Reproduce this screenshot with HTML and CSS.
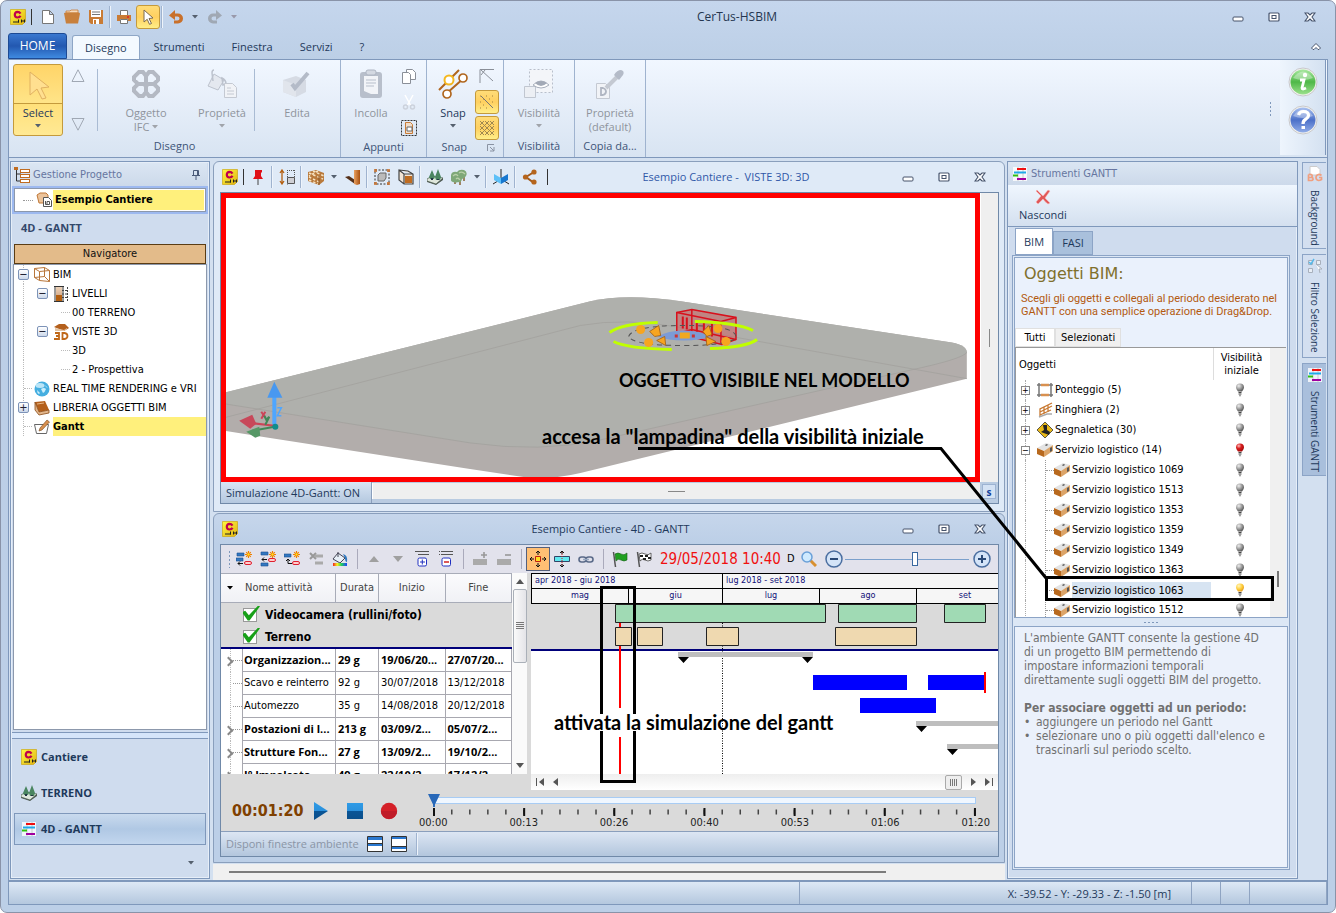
FILE: index.html
```html
<!DOCTYPE html>
<html lang="it">
<head>
<meta charset="utf-8">
<title>CerTus-HSBIM</title>
<link rel="stylesheet" href="styles.css">
</head>
<body>
<svg class="defs" aria-hidden="true">
  <defs>
    <linearGradient id="g-gold" x1="0" y1="0" x2="1" y2="1"><stop offset="0" stop-color="#fffa40"/><stop offset="1" stop-color="#e0b010"/></linearGradient>
    <linearGradient id="g-play" x1="0" y1="0" x2="0" y2="1"><stop offset="0" stop-color="#2f9be6"/><stop offset=".5" stop-color="#2a90dc"/><stop offset=".5" stop-color="#0a5596"/><stop offset="1" stop-color="#0a4f8c"/></linearGradient>
    <radialGradient id="g-grey" cx=".35" cy=".3" r=".8"><stop offset="0" stop-color="#eee"/><stop offset=".5" stop-color="#999"/><stop offset="1" stop-color="#444"/></radialGradient>
    <radialGradient id="g-red" cx=".35" cy=".3" r=".8"><stop offset="0" stop-color="#ffc0c0"/><stop offset=".4" stop-color="#d82020"/><stop offset="1" stop-color="#900"/></radialGradient>
    <radialGradient id="g-yel" cx=".35" cy=".3" r=".8"><stop offset="0" stop-color="#fff6c0"/><stop offset=".5" stop-color="#ffd040"/><stop offset="1" stop-color="#e09010"/></radialGradient>
    <linearGradient id="g-green" x1="0" y1="0" x2="0" y2="1"><stop offset="0" stop-color="#a8e8a0"/><stop offset=".5" stop-color="#4fb848"/><stop offset="1" stop-color="#9be08c"/></linearGradient>
    <linearGradient id="g-blue" x1="0" y1="0" x2="0" y2="1"><stop offset="0" stop-color="#a8c0f0"/><stop offset=".5" stop-color="#4c70c8"/><stop offset="1" stop-color="#90acE8"/></linearGradient>
    <linearGradient id="g-slot" x1="0" y1="0" x2="0" y2="1"><stop offset="0" stop-color="#ecd2b8"/><stop offset=".6" stop-color="#d8b090"/><stop offset=".6" stop-color="#b45f10"/></linearGradient>
    <linearGradient id="g-pipe"><stop offset="0" stop-color="#e8a060"/><stop offset="1" stop-color="#a85010"/></linearGradient>
  </defs>
  <symbol id="logo" viewBox="0 0 16 16"><path d="M.5 .5h15v12l-3 3H.5z" fill="url(#g-gold)" stroke="#c8a000" stroke-width=".6"/><path d="M10.500 4.600Q9.500 2.800 7.500 2.800 4.800 3 4.800 5.800 4.800 8.400 7.500 8.500 9.800 8.400 10.500 6.800" fill="none" stroke="#c0004c" stroke-width="2.200"/><path d="M3 13h6M8.500 10.500v3M11.500 10.500v3M14.500 10.500v3M11.500 12h3" stroke="#222" fill="none"/></symbol>
  <symbol id="doc" viewBox="0 0 16 16"><path d="M2.500 1.500h7l4 4v9h-11zM9.500 1.500v4h4" fill="#fff" stroke="#777"/></symbol>
  <symbol id="folder" viewBox="0 0 16 16"><path d="M2 2h4l1-1h7v3H2z" fill="#f6dcc0" stroke="#c97b35" stroke-width=".8"/><path d="M0 4l3-.5h12l1 1-2 10H2z" fill="#c8803c"/></symbol>
  <symbol id="save" viewBox="0 0 16 16"><path d="M1 1h14v14H3l-2-2z" fill="#c97b35"/><path d="M3 1h10v7H3zM5 10h6v5H5z" fill="#fff"/><path d="M4 3h8M4 5.500h8" stroke="#777"/><path d="M6 11h2v4H6z" fill="#c97b35"/></symbol>
  <symbol id="print" viewBox="0 0 16 16"><path d="M4.500 1.500h7v5h-7zM4.500 10.500h7v4h-7z" fill="#fff" stroke="#777"/><path d="M1 6h14v6h-3v-2H4v2H1z" fill="#c97b35"/><circle cx="12" cy="8" r="1" fill="#e02020"/></symbol>
  <symbol id="cursor" viewBox="0 0 16 16"><path d="M4 1l9 8-4 .5 2.500 5-2 .8-2.300-5L4 13z" fill="#fff" stroke="#7a6a50"/></symbol>
  <symbol id="undo" viewBox="0 0 16 16"><path d="M1 6.500L7 1v3.500h3a5 5 0 0 1 0 10H6v-3h3.500a2 2 0 0 0 0-4H7v3.500z" fill="#c9702a"/></symbol>
  <symbol id="caret" viewBox="0 0 6 4"><path d="M0 0h6L3 3.500z" fill="currentColor"/></symbol>
  <symbol id="gantt" viewBox="0 0 16 16"><path d="M1 1h14v14H1z" fill="#fff" opacity=".8"/><path d="M6 1v14M11 1v14" stroke="#ccc"/><path d="M5 3h9" stroke="#f01010" stroke-width="2"/><path d="M2 6.500h12" stroke="#20a8e8" stroke-width="2"/><path d="M1 9.500h5" stroke="#30c010" stroke-width="2"/><path d="M5 13h9" stroke="#a000a0" stroke-width="2"/></symbol>
  <symbol id="terrain" viewBox="0 0 16 16"><path d="M0 10l5-3 11 2-7 6-9-3z" fill="#dfe7dc" stroke="#5b6b5b" stroke-width=".8"/><path d="M0 12l9 3 7-6v2l-7 5-9-3z" fill="#4c5850"/><path d="M5 1l3 7-1 2H3L2 8zM11 0l3 8-1 3H9L8 8z" fill="#4a8560"/><path d="M4 9h2v2H4zM10 10h2v1h-2z" fill="#234"/></symbol>
  <symbol id="tree3" viewBox="0 0 16 16"><path d="M4 8v7M9 7v9M13 5v7" stroke="#8d6a3e" stroke-width="1.600"/><path d="M0 6q1-4 6-3 2-3 7-2 4 2 2 6-2 3-4 3-1 4-4 3-2 1-5 0-3-1-2-4z" fill="#7fa878"/><path d="M2 7q3-3 5 0M8 4q3-2 6 1M5 10q2-2 4 1" fill="none" stroke="#b9d0a8" stroke-width="1.300"/></symbol>
  <symbol id="pin" viewBox="0 0 16 16"><path d="M8 10v6" stroke="#444"/><path d="M5 1h7v2l-1 1v3l2 3H3l2-3V4z" fill="#e01018"/></symbol>
  <symbol id="level" viewBox="0 0 16 16"><path d="M3 1v14M1 4l2-3 2 3M1 12l2 3 2-3" fill="none" stroke="#b45f10" stroke-width="1.300"/><path d="M8.500 1v14.500M15.500 1v8M8 1.500h7" fill="none" stroke="#555" stroke-dasharray="1 1"/><path d="M8.500 8.500h7v6h-7z" fill="#cfcfd4" stroke="#555"/></symbol>
  <symbol id="cube" viewBox="0 0 16 16"><path d="M0 3l8-2 8 3v8l-5 4-11-4z" fill="#b97a3c"/><path d="M1 4l14 6M1 8l10 5M1 11l9 4M5 2l11 5M10 2L1 7" stroke="#f6e2c0" stroke-width="1.500" stroke-dasharray="2.500 2"/><path d="M11 7v9" stroke="#8a5320"/></symbol>
  <symbol id="pipe" viewBox="0 0 16 16"><path d="M0 8l4-1 6 4v4z" fill="#553018"/><path d="M9 1h6v14l-3 1-3-1z" fill="url(#g-pipe)"/></symbol>
  <symbol id="selcube" viewBox="0 0 16 16"><rect x="1" y="1" width="14" height="14" fill="none" stroke="#333" stroke-dasharray="2 1.500"/><path d="M4 6l2-2h6v5l-2 3H4z" fill="#bbb" stroke="#666"/><path d="M0 0h3v3H0zM13 0h3v3h-3zM0 13h3v3H0zM13 13h3v3h-3z" fill="#c9702a" opacity=".8"/></symbol>
  <symbol id="cubeframe" viewBox="0 0 16 16"><path d="M1 1l9 1 5 3v10H6l-5-4zM1 1l5 4h9M6 5v10" fill="#f3e5d6" stroke="#444" stroke-width="1.200"/><path d="M7 7h7v7H7z" fill="#c06c20"/></symbol>
  <symbol id="mirror" viewBox="0 0 16 16"><path d="M8 0v9M0 15l8-5 8 5" stroke="#222" fill="none"/><path d="M1 5l7 4v6l-7-4z" fill="#5cc0f8"/><path d="M15 5L8 9v6l7-4z" fill="#1878d0"/></symbol>
  <symbol id="share" viewBox="0 0 16 16"><path d="M12 3L4 8l8 6" fill="none" stroke="#a35a1a" stroke-width="2"/><circle cx="12" cy="3" r="2.600" fill="#b5651d"/><circle cx="3.500" cy="8" r="2.600" fill="#b5651d"/><circle cx="12" cy="13" r="2.600" fill="#b5651d"/></symbol>
  <symbol id="hierarchy" viewBox="0 0 16 16"><path d="M2.500 2v12H7M2.500 7H7" fill="none" stroke="#333"/><rect x="0" y="0" width="4" height="3" fill="#c06c20"/><rect x="6.500" y="2.500" width="9" height="3" fill="#fff" stroke="#c06c20"/><rect x="6.500" y="7.500" width="9" height="3" fill="#fff" stroke="#c06c20"/><rect x="6.500" y="12.500" width="9" height="3" fill="#fff" stroke="#c06c20"/></symbol>
  <symbol id="proj" viewBox="0 0 16 16"><path d="M1 3l3-2h6l2 2v8H3z" fill="#ecc39a" stroke="#c07838"/><path d="M7.500 5.500h5l3 3v6h-8z" fill="#fff" stroke="#555"/><path d="M9.500 9v3.500h4V9.500H11v3" fill="none" stroke="#555"/></symbol>
  <symbol id="wirebox" viewBox="0 0 16 16"><path d="M.5 1.500l10-1 5 3v11l-10-1-5-3zM.5 1.500l5 3 10-1M5.500 4.500v9M10.500 .5v9l5 5M10.500 9.500l-10 1" fill="none" stroke="#b8763a"/></symbol>
  <symbol id="levels" viewBox="0 0 16 16"><path d="M1 .5h10M1 15.500h10M2 1v14M10 1v14" stroke="#333"/><path d="M3 1h6v14H3z" fill="url(#g-slot)"/><path d="M9 4.500h5M9 8h5M9 11.500h5M14.500 1v15" stroke="#444" stroke-dasharray="2 1"/></symbol>
  <symbol id="house3d" viewBox="0 0 16 16"><path d="M1 3l5-3h6l4 4-5 3z" fill="#b4601c"/><path d="M2 4v3h9l3-2V4l-3 2z" fill="#e3c4a4"/><path d="M2 9h4v6H1M3 12h3M9.500 9v6h2q3-.5 3-3t-3-3z" fill="none" stroke="#c06818" stroke-width="1.800"/></symbol>
  <symbol id="globe" viewBox="0 0 16 16"><circle cx="8" cy="8" r="7.500" fill="#45aee0"/><ellipse cx="6" cy="4.500" rx="4.500" ry="2.500" fill="#d8f2fc" opacity=".8"/><path d="M7 8q3-2 5 0-1 3-3 4zM3 9l3 3-1 1q-2-1-2-4zM11 4l3 3-2-1z" fill="#cdeffc"/></symbol>
  <symbol id="book" viewBox="0 0 16 16"><path d="M1 2l10-1 4 9-10 2z" fill="#b4601c"/><path d="M3 4l7-1" stroke="#e8b888"/><path d="M1 2l4 10 10-2v3L5 15 1 10z" fill="#e2b68c" stroke="#8a4a14" stroke-width=".8"/></symbol>
  <symbol id="notepen" viewBox="0 0 16 16"><path d="M0.500 5.500h14l-2 9h-10z" fill="#fff" stroke="#666"/><path d="M5 12l1-3 7-8 2.500 2-7.500 8z" fill="#d89050" stroke="#7a4a1c" stroke-width=".6"/></symbol>
  <symbol id="scaff" viewBox="0 0 16 16"><path d="M2 1v14M14 1v14M0 3h16M0 13h16" stroke="#777" stroke-width="1.500"/><path d="M4 3h8M4 13h8" stroke="#d89050" stroke-width="2.400"/></symbol>
  <symbol id="rail" viewBox="0 0 16 16"><path d="M3 15V7l12-6M3 10l12-6M3 13l11-5M7 12V5M11 10V3" fill="none" stroke="#c87830" stroke-width="1.300"/><path d="M2 15l8-3h5" stroke="#aaa" stroke-width="1.500" fill="none"/></symbol>
  <symbol id="sign" viewBox="0 0 16 16"><path d="M8 0l8 8-8 8-8-8z" fill="#e8b818" stroke="#333" stroke-width=".8"/><path d="M6 3h4v5l3 2-1 3-8-3 3-2z" fill="#222"/></symbol>
  <symbol id="crate" viewBox="0 0 16 16"><path d="M0 6l9-5 7 2-8 6z" fill="#e3e3e3"/><path d="M0 6l7 3v6l-7-3z" fill="#b8691e"/><path d="M7 9l9-6v6l-9 6z" fill="#dca468"/><path d="M13 6l2-1v4l-2 1z" fill="#555"/><path d="M8 3l2-1 1 1-2 1z" fill="#555"/></symbol>
  <symbol id="bulb" viewBox="0 0 10 14"><path d="M5 .5a4 4 0 0 1 4 4Q9 6 7 8.500H3Q1 6 1 4.500a4 4 0 0 1 4-4z"/><path d="M3.500 9.500h3M3.500 11h3" stroke="#444"/><circle cx="5" cy="12.500" r="1" fill="#999"/></symbol>
  <symbol id="star" viewBox="0 0 6 6"><path d="M3 0v6M0 3h6M1 1l4 4M5 1L1 5" stroke="#f08000"/><circle cx="3" cy="3" r="1" fill="#ffe020"/></symbol>
  <symbol id="t-add" viewBox="0 0 16 16"><path d="M1 2h7v3H1zM0 7h7v3H0z" fill="#3478c0" stroke="#1a4f90" stroke-width=".6"/><use href="#star" x="9" y="0" width="7" height="7"/><rect x="8.500" y="10.500" width="7" height="3" rx="1.500" fill="#fcc" stroke="#e02030"/><path d="M7 12.500H2M4 10.500l-2 2 2 2" stroke="#111" fill="none"/></symbol>
  <symbol id="t-mid" viewBox="0 0 16 16"><path d="M1 1h7v3H1zM1 12h7v3H1z" fill="#3478c0" stroke="#1a4f90" stroke-width=".6"/><use href="#star" x="9" y="0" width="7" height="7"/><rect x="8.500" y="7.500" width="7" height="3" rx="1.500" fill="#fcc" stroke="#e02030"/><path d="M7 8.500H2M4 6.500l-2 2 2 2" stroke="#111" fill="none"/></symbol>
  <symbol id="t-sub" viewBox="0 0 16 16"><path d="M0 3h7v3H0z" fill="#3478c0" stroke="#1a4f90" stroke-width=".6"/><use href="#star" x="9" y="0" width="7" height="7"/><rect x="8.500" y="10.500" width="7" height="3" rx="1.500" fill="#fcc" stroke="#e02030"/><path d="M8 12.500H4V8M2 10l2-2 2 2" stroke="#111" fill="none"/></symbol>
  <symbol id="t-del" viewBox="0 0 16 16"><path d="M2 2l6 6M8 2L2 8" stroke="#999" stroke-width="2"/><path d="M7 5h8M7 12h8" stroke="#aaa" stroke-width="3"/></symbol>
  <symbol id="bucket" viewBox="0 0 16 16"><defs><linearGradient id="g-rain"><stop offset="0" stop-color="#f02020"/><stop offset=".3" stop-color="#f8f020"/><stop offset=".6" stop-color="#20d060"/><stop offset="1" stop-color="#2040ff"/></linearGradient></defs><path d="M6 2l7 5-5 5-7-4z" fill="#e8f0f8" stroke="#445" /><path d="M11 3q5 1 4 8-2 0-2-4z" fill="#2c78c0"/><path d="M6 1v5" stroke="#445"/><path d="M1 12h14v3H1z" fill="url(#g-rain)"/></symbol>
  <symbol id="tri-up" viewBox="0 0 16 16"><path d="M3 11h10L8 5z" fill="#a0a0a0"/></symbol>
  <symbol id="tri-down" viewBox="0 0 16 16"><path d="M3 5h10l-5 6z" fill="#a0a0a0"/></symbol>
  <symbol id="exp-all" viewBox="0 0 16 16"><path d="M1 .5h14M4 3.500h11" stroke="#555"/><rect x="4" y="7" width="8.500" height="8" rx="1.500" fill="#fff" stroke="#2030c0"/><path d="M6 11h5M8.300 8.500v5" stroke="#2030c0"/></symbol>
  <symbol id="col-all" viewBox="0 0 16 16"><path d="M1 .5h14M1 3.500h14" stroke="#555" stroke-dasharray="1 1 12 0"/><rect x="4" y="7" width="8.500" height="8" rx="1.500" fill="#fff" stroke="#2030c0"/><path d="M6 11h5" stroke="#d02020" stroke-width="1.500"/></symbol>
  <symbol id="blk-plus" viewBox="0 0 16 16"><path d="M1 8h14v6H1z" fill="#aaa"/><path d="M9 4h6M12 1v6" stroke="#999" stroke-width="1.600"/></symbol>
  <symbol id="blk-minus" viewBox="0 0 16 16"><path d="M1 8h14v6H1z" fill="#aaa"/><path d="M9 4h6" stroke="#999" stroke-width="1.600"/></symbol>
  <symbol id="center" viewBox="0 0 16 16"><path d="M5.500 5.500h5v5h-5z" fill="#ffe020" stroke="#c02010"/><path d="M8 0v4M8 12v4M0 8h4M12 8h4M6 2l2-2 2 2M6 14l2 2 2-2M2 6L0 8l2 2M14 6l2 2-2 2" stroke="#111" fill="none"/></symbol>
  <symbol id="fit" viewBox="0 0 16 16"><path d="M.5 5.500h15v5H.5z" fill="#60e8f0" stroke="#346"/><path d="M8 1v14" stroke="#c22" stroke-dasharray="1 1"/><path d="M8 0v3M6 2l2-2 2 2M8 16v-3M6 14l2 2 2-2" stroke="#111" fill="none"/></symbol>
  <symbol id="chain" viewBox="0 0 16 16"><rect x="1" y="6" width="7" height="5" rx="2.500" fill="none" stroke="#5a6a88" stroke-width="1.600"/><rect x="8" y="6" width="7" height="5" rx="2.500" fill="none" stroke="#5a6a88" stroke-width="1.600"/><path d="M5 8.500h6" stroke="#98a8c0" stroke-width="1.500"/></symbol>
  <symbol id="flag-g" viewBox="0 0 16 16"><path d="M1.500 1l2 15" stroke="#555" stroke-width="1.500"/><path d="M3 3q3-2 6 0t6-1v7q-3 2-6 0t-5 1z" fill="#20a020" stroke="#186018" stroke-width=".6"/></symbol>
  <symbol id="flag-c" viewBox="0 0 16 16"><path d="M1.500 1l2 15" stroke="#555" stroke-width="1.500"/><path d="M3 3q3-2 6 0t6-1v7q-3 2-6 0t-5 1z" fill="#fff" stroke="#444" stroke-width=".8"/><path d="M4 4h3v2H4zM9 4h3v2H9zM7 7h3v2H7zM12 6h3v2h-3z" fill="#222"/></symbol>
  <symbol id="lens" viewBox="0 0 16 16"><path d="M9 9l6 6" stroke="#d89030" stroke-width="3"/><circle cx="6" cy="6" r="5" fill="#cfeaff" stroke="#6aa0d8" stroke-width="1.500"/></symbol>
  <symbol id="zminus" viewBox="0 0 18 18"><circle cx="9" cy="9" r="8" fill="#d4e4f8" stroke="#4a6ea0" stroke-width="1.500"/><path d="M5 9h8" stroke="#2a4a78" stroke-width="2"/></symbol>
  <symbol id="zplus" viewBox="0 0 18 18"><circle cx="9" cy="9" r="8" fill="#d4e4f8" stroke="#4a6ea0" stroke-width="1.500"/><path d="M5 9h8M9 5v8" stroke="#2a4a78" stroke-width="2"/></symbol>
  <symbol id="w-min" viewBox="0 0 12 12"><rect x="1" y="6" width="10" height="4" rx="1" fill="#fff" stroke="#46536b"/></symbol>
  <symbol id="w-max" viewBox="0 0 12 12"><rect x="1" y="2" width="10" height="8" rx="1" fill="#fff" stroke="#46536b" stroke-width="1.200"/><rect x="4" y="4.500" width="4" height="3" fill="#fff" stroke="#46536b"/></symbol>
  <symbol id="w-close" viewBox="0 0 12 12"><path d="M1 2h3l2 2 2-2h3L8 6l3 4H8L6 8l-2 2H1l3-4z" fill="#fff" stroke="#46536b" stroke-width="1.100"/></symbol>
  <symbol id="redx" viewBox="0 0 16 16"><path d="M2 1q3 3 6 6l5-6 2 1-5 7 5 5-2 1q-3-2-5-5l-5 5-2-2 5-6-5-5z" fill="#e05858" stroke="#fbb" stroke-width=".5"/></symbol>
</svg>

<div class="app">
  <header class="titlebar">
    <div class="quick">
      <svg class="i16"><use href="#logo"/></svg><span class="bar"></span>
      <button class="qb" aria-label="Nuovo"><svg class="i16"><use href="#doc"/></svg></button>
      <button class="qb" aria-label="Apri"><svg class="i16"><use href="#folder"/></svg></button>
      <button class="qb" aria-label="Salva"><svg class="i16"><use href="#save"/></svg></button>
      <span class="sep"></span>
      <button class="qb" aria-label="Stampa"><svg class="i16"><use href="#print"/></svg></button>
      <button class="qb gold" aria-label="Selezione"><svg class="i16"><use href="#cursor"/></svg></button>
      <span class="sep"></span>
      <button class="qb" aria-label="Annulla"><svg class="i16"><use href="#undo"/></svg></button>
      <svg class="caret"><use href="#caret"/></svg>
      <button class="qb redo" aria-label="Ripeti"><svg class="i16 flip"><use href="#undo"/></svg></button>
      <svg class="caret pale"><use href="#caret"/></svg>
    </div>
    <h1 class="title">CerTus-HSBIM</h1>
    <div class="winbtns">
      <button aria-label="Riduci"><svg class="i12"><use href="#w-min"/></svg></button>
      <button aria-label="Ingrandisci"><svg class="i12"><use href="#w-max"/></svg></button>
      <button aria-label="Chiudi"><svg class="i12"><use href="#w-close"/></svg></button>
    </div>
  </header>

  <nav class="tabs">
    <button class="home">HOME</button>
    <button class="tab active">Disegno</button>
    <button class="tab">Strumenti</button>
    <button class="tab">Finestra</button>
    <button class="tab">Servizi</button>
    <button class="tab">?</button>
    <button class="collapse" aria-label="Comprimi"><svg class="i12" viewBox="0 0 12 12"><path d="M1.500 8L6 3.500 10.500 8 9 9.500H8l-2-2-2 2H3z" fill="#fff" stroke="#46536b"/></svg></button>
  </nav>

  <section class="ribbon">
    <div class="rgroup g-draw">
      <div class="rrow">
        <button class="big select"><span class="sel-top"><svg class="i32" viewBox="0 0 32 32"><path d="M8 3l19 15-8 1 5 10-4 1-5-10-7 6z" fill="#ffdf90" stroke="#e0b060"/></svg></span><span>Select</span><svg class="caret"><use href="#caret"/></svg></button>
        <div class="arrows">
          <svg viewBox="0 0 14 13"><path d="M1 12.500h12L7 .8z" fill="none" stroke="#a0a8b4"/></svg>
          <svg viewBox="0 0 14 13"><path d="M1 .5h12L7 12.200z" fill="none" stroke="#a0a8b4"/></svg>
        </div>
        <span class="rsep"></span>
        <button class="big off w76"><svg class="i32" viewBox="0 0 32 32"><g fill="none" stroke="#b4b9c3" stroke-width="4"><path d="M9 4h4l3 4v6l-2 2H8l-4-4V9z"/><path d="M19 4h4l5 5v3l-4 4h-6l-2-2V8z"/><path d="M8 16h6l2 2v6l-3 4H9l-5-5v-3z"/><path d="M18 16h6l4 4v3l-5 5h-4l-3-4v-6z"/></g></svg><span>Oggetto</span><span>IFC <svg class="caret"><use href="#caret"/></svg></span></button>
        <button class="big off w76"><svg class="i32" viewBox="0 0 32 32"><path d="M8 6l10 6-6 10-10-4z" fill="#e4e8ef" stroke="#bcc2cd"/><path d="M8 2q-2 0-2 3l1 8M16 10q4 2 4 6l-3 1z" fill="none" stroke="#bcc2cd" stroke-width="1.500"/><path d="M18.500 15.500h8l4 4v10h-12zM21 20h4M21 23h7M21 26h7" fill="#f1f3f7" stroke="#c4c9d2"/></svg><span>Proprietà</span><svg class="caret"><use href="#caret"/></svg></button>
        <span class="rsep r2nd"></span>
        <button class="big off w74"><svg class="i32" viewBox="0 0 32 32"><path d="M2 12l13-4 10 4v12l-10 5-13-5z" fill="#d6dbe4"/><path d="M2 12l13 5v12l-13-5z" fill="#e1e5ec"/><path d="M11 16l3 4L27 5" fill="none" stroke="#b4bbc8" stroke-width="4"/></svg><span>Edita</span></button>
      </div>
      <div class="rlabel">Disegno</div>
    </div>
    <div class="rgroup g-clip">
      <div class="rrow">
        <button class="big off w52"><svg class="i32" viewBox="0 0 32 32"><rect x="5" y="4" width="22" height="26" rx="3" fill="#b8bfcb"/><path d="M9 8h14v18h-7l-7-3z" fill="#f2f4f8"/><path d="M11 12h10M11 15h10M11 18h8" stroke="#b8bfcb"/><rect x="11" y="2" width="10" height="5" rx="2" fill="#d4d9e2" stroke="#aeb5c2"/></svg><span>Incolla</span></button>
        <div class="stack">
          <button aria-label="Copia"><svg class="i16" viewBox="0 0 16 16"><path d="M5.500 1.500h6l3 3v7h-9z" fill="#fff" stroke="#8a8f98"/><path d="M1.500 4.500h6l2 2v9h-8z" fill="#fff" stroke="#8a8f98"/></svg></button>
          <button aria-label="Taglia"><svg class="i16" viewBox="0 0 16 16"><path d="M4 1l6 11M12 1L6 12" stroke="#fff" stroke-width="1.500"/><circle cx="4.500" cy="13" r="2" fill="none" stroke="#ccd2dc" stroke-width="1.500"/><circle cx="11.500" cy="13" r="2" fill="none" stroke="#ccd2dc" stroke-width="1.500"/></svg></button>
          <button aria-label="Seleziona"><svg class="i16" viewBox="0 0 16 16"><rect x=".5" y=".5" width="15" height="15" fill="none" stroke="#333" stroke-dasharray="2 1"/><path d="M4.500 2.500h5l2 2v9h-7z" fill="#f0dcc8" stroke="#c97b35"/><path d="M6 7h5v4H6z" fill="#fff" stroke="#666"/></svg></button>
        </div>
      </div>
      <div class="rlabel">Appunti</div>
    </div>
    <div class="rgroup g-snap">
      <div class="rrow">
        <button class="big w44"><svg class="i32" viewBox="0 0 32 32"><path d="M2 22L22 2M10 25L27 10" stroke="#b0661e" stroke-width="2"/><circle cx="12" cy="12" r="4.500" fill="#fff" stroke="#f4b820" stroke-width="2"/><circle cx="26" cy="10" r="4" fill="#fff" stroke="#b0661e" stroke-width="1.700"/><circle cx="10" cy="26" r="4" fill="#fff" stroke="#b0661e" stroke-width="1.700"/></svg><span>Snap</span><svg class="caret"><use href="#caret"/></svg></button>
        <div class="stack tight">
          <button aria-label="Snap angolo"><svg class="i16" viewBox="0 0 16 16"><path d="M1 15V1.500h14M2 2l12 11M2 7l4-5" fill="none" stroke="#8a8f98"/></svg></button>
          <button class="gold" aria-label="Griglia punti"><svg class="i16" viewBox="0 0 16 16"><path d="M2 2l12 12" stroke="#777"/><path d="M1 2h1M7 2h1M13 2h1M1 8h1M13 8h1M1 14h1M7 14h1M4 5h1M10 5h1M4 11h1" stroke="#a08040"/></svg></button>
          <button class="gold" aria-label="Griglia"><svg class="i16" viewBox="0 0 16 16"><path d="M1 1l14 14M6 1l9 9M11 1l4 4M1 6l9 9M1 11l4 4M15 1L1 15M10 1L1 10M5 1L1 5M15 6L6 15M15 11l-4 4" stroke="#a08850"/></svg></button>
        </div>
      </div>
      <div class="rlabel">Snap<svg class="launch" viewBox="0 0 8 8"><path d="M.5 7V.5H7M3 3l4 4M7 3v4H3" fill="none" stroke="#8a93a3"/></svg></div>
    </div>
    <div class="rgroup g-vis">
      <div class="rrow">
        <button class="big off w70"><svg class="i32" viewBox="0 0 32 32"><path d="M6.500 1.500h23v23h-23z" fill="#f3f5f9" stroke="#b8bfcb" stroke-dasharray="2 2"/><path d="M1.500 18.500h11v11h-11z" fill="#eceff4" stroke="#c0c6d0"/><path d="M10 17q8-8 16 0-8 6-16 0z" fill="#fff" stroke="#a8afbc"/><path d="M12 15q6-4 12 0-6 6-12 0z" fill="#a2a9b6"/></svg><span>Visibilità</span><svg class="caret"><use href="#caret"/></svg></button>
      </div>
      <div class="rlabel">Visibilità</div>
    </div>
    <div class="rgroup g-copy">
      <div class="rrow">
        <button class="big off w70"><svg class="i32" viewBox="0 0 32 32"><path d="M2.500 15.500h9l4 4v11h-13z" fill="#f1f3f7" stroke="#c4c9d2"/><path d="M7 20v7h2q3-1 3-3.500T9 20z" fill="none" stroke="#b0b6c2" stroke-width="1.800"/><path d="M12 20L23 9" stroke="#c4c9d2" stroke-width="4"/><path d="M20 7l5 5 4-5q2-4-2-5-4 0-7 5z" fill="#b4bbc8"/></svg><span>Proprietà</span><span>(default)</span></button>
      </div>
      <div class="rlabel">Copia da...</div>
    </div>
    <div class="rspace"><span class="grip v"></span></div>
    <div class="help">
      <button aria-label="Informazioni"><svg class="i30" viewBox="0 0 30 30"><circle cx="15" cy="15" r="14" fill="#f2f2ee" stroke="#c8c8cc"/><circle cx="15" cy="15" r="12.500" fill="url(#g-green)"/><path d="M5 11q10-13 20 0-10 4-20 0z" fill="#fff" opacity=".35"/><path d="M12 13h4l-2 8q0 2 4 0" fill="none" stroke="#fff" stroke-width="2.800"/><circle cx="17" cy="8" r="2.200" fill="#fff"/></svg></button>
      <button aria-label="Aiuto"><svg class="i30" viewBox="0 0 30 30"><circle cx="15" cy="15" r="14" fill="#f2f2ee" stroke="#c8c8cc"/><circle cx="15" cy="15" r="12.500" fill="url(#g-blue)"/><path d="M5 11q10-13 20 0-10 4-20 0z" fill="#fff" opacity=".35"/><path d="M10.500 10q1-3.500 5-3.500 5 0 5 4 0 2-2.500 3.500-3 1.500-3 5" fill="none" stroke="#fff" stroke-width="3.200"/><path d="M13.500 21h3.500v3h-3.500z" fill="#fff"/></svg></button>
    </div>
  </section>

  <main class="work">
    <aside class="panel project">
      <div class="phead"><svg class="i16"><use href="#hierarchy"/></svg><span>Gestione Progetto</span><svg class="i12 pushpin" viewBox="0 0 12 12"><path d="M3.500 1.500h5v5h-5zM2 6.500h8M6 7v4M7.500 2v4" fill="none" stroke="#4a5a78"/></svg></div>
      <div class="projbox"><span class="dots"></span><svg class="i16"><use href="#proj"/></svg><b>Esempio Cantiere</b></div>
      <h2 class="ptitle">4D - GANTT</h2>
      <div class="navhead">Navigatore</div>
      <ul class="tree nav-tree">
        <li class="l0"><button class="ex" aria-label="Comprimi">−</button><svg class="i16"><use href="#wirebox"/></svg><span>BIM</span></li>
        <li class="l1"><button class="ex" aria-label="Comprimi">−</button><svg class="i16"><use href="#levels"/></svg><span>LIVELLI</span></li>
        <li class="l2"><span>00 TERRENO</span></li>
        <li class="l1"><button class="ex" aria-label="Comprimi">−</button><svg class="i16"><use href="#house3d"/></svg><span>VISTE 3D</span></li>
        <li class="l2"><span>3D</span></li>
        <li class="l2"><span>2 - Prospettiva</span></li>
        <li class="l0 leaf"><svg class="i16"><use href="#globe"/></svg><span>REAL TIME RENDERING e VRI</span></li>
        <li class="l0"><button class="ex" aria-label="Espandi">+</button><svg class="i16"><use href="#book"/></svg><span>LIBRERIA OGGETTI BIM</span></li>
        <li class="l0 leaf"><svg class="i16"><use href="#notepen"/></svg><b class="hl">Gantt</b></li>
      </ul>
      <div class="splitter"></div>
      <div class="sections">
        <button><svg class="i16"><use href="#logo"/></svg>Cantiere</button>
        <button><svg class="i16"><use href="#terrain"/></svg>TERRENO</button>
        <button class="current"><svg class="i16"><use href="#gantt"/></svg>4D - GANTT</button>
      </div>
      <div class="more"><svg class="caret"><use href="#caret"/></svg></div>
    </aside>

    <div class="center">
      <section class="win view">
        <header class="wbar">
          <svg class="i16"><use href="#logo"/></svg><span class="bar"></span>
          <button><svg class="i16"><use href="#pin"/></svg></button><span class="sep"></span>
          <button><svg class="i16"><use href="#level"/></svg></button><span class="sep"></span>
          <button><svg class="i16"><use href="#cube"/></svg></button><svg class="caret"><use href="#caret"/></svg>
          <button><svg class="i16"><use href="#pipe"/></svg></button><span class="sep"></span>
          <button><svg class="i16"><use href="#selcube"/></svg></button>
          <button><svg class="i16"><use href="#cubeframe"/></svg></button><span class="sep"></span>
          <button><svg class="i16"><use href="#terrain"/></svg></button>
          <button><svg class="i16"><use href="#tree3"/></svg></button><svg class="caret"><use href="#caret"/></svg><span class="sep"></span>
          <button><svg class="i16"><use href="#mirror"/></svg></button><span class="sep"></span>
          <button><svg class="i16"><use href="#share"/></svg></button><span class="bar"></span>
          <h2 class="wtitle">Esempio Cantiere -&nbsp; VISTE 3D: 3D</h2>
          <div class="winbtns">
            <button aria-label="Riduci"><svg class="i12"><use href="#w-min"/></svg></button>
            <button aria-label="Ingrandisci"><svg class="i12"><use href="#w-max"/></svg></button>
            <button aria-label="Chiudi"><svg class="i12"><use href="#w-close"/></svg></button>
          </div>
        </header>
        <div class="viewbody">
          <div class="scene">
            <svg viewBox="225 198 750 278" preserveAspectRatio="xMidYMid slice">
              <path d="M225 392L590 301Q625 293 680 301L950 342Q965 345 965 352V378L580 472Q555 478 530 477L470 468L225 430z" fill="#b2adab"/>
              <path d="M225 392L590 301Q625 293 680 301L950 342Q965 345 965 352Q960 358 920 367L600 439Q540 452 470 442L225 403z" fill="#afb0ac"/>
              <path d="M225 403L470 442Q540 452 600 439L920 367Q960 358 965 352M225 417L580 325Q625 317 680 327L965 378" fill="none" stroke="#a2a19d" stroke-width=".8"/>
              <g stroke="#d8101c" stroke-width="1.500" fill="#cc606088"><path d="M676 312l15-3 44 8v22l-14 5-45-11z"/><path d="M676 312l44 9 15-4M720 321v22M691 309v25M676 333l15-4 44 10" fill="none"/><path d="M682 316v12M686 317v12M696 320v12M703 321v12M711 323v13" fill="none" stroke-width="2"/></g>
              <g fill="none"><path d="M628 336q4-11 55-11t52 11q-2 9-52 9t-55-9z" stroke="#555" stroke-dasharray="5 4"/><path d="M609 332q12-9 48-10M694 321q42 1 58 9M613 341q14 7 58 8M709 348q36-1 47-9" stroke="#c0ff00" stroke-width="3"/></g>
              <path d="M657 336q10-6 26-6t26 6q-10 4-26 4t-26-4z" fill="#7c9bd6"/><path d="M679 332h10v6h-10z" fill="#f0a820"/><path d="M674 334h3v3h-3zM691 334h3v3h-3z" fill="#c33"/>
              <g fill="#f7a520"><circle cx="640" cy="329" r="4.500"/><circle cx="717" cy="328" r="4.500"/><circle cx="648" cy="342" r="4.500"/><circle cx="725" cy="341" r="4.500"/><path d="M649 331l9-6 2 10-6 1zM656 340l8-4 1 9zM702 331l6-6 3 9-5 2zM705 336l10 5-9 4z" stroke="#a05c10" stroke-width=".8"/></g>
              <path d="M275 425v-32" stroke="#4ea6ff" stroke-width="4"/><path d="M268 397l7-16 8 16z" fill="#4898f0"/><path d="M278 407h4l-4 8h4" fill="none" stroke="#4ea6ff" stroke-width="1.500"/>
              <path d="M275 425l-25-3M262 411l4 6m0-6l-4 7" stroke="#cc4458" stroke-width="2"/><path d="M240 420l13-6 4 9-6 5z" fill="#c8485a"/>
              <path d="M275 426l-22 4M265 415l2 4 3-3-4 8" fill="none" stroke="#408858" stroke-width="2"/><path d="M247 431l13-5 1 9-5 2z" fill="#569866"/><circle cx="276" cy="426" r="3" fill="#108c8c"/>
            </svg>
          </div>
          <div class="vscroll"><span></span></div>
          <div class="simbar"><button class="sim">Simulazione 4D-Gantt: ON</button><span class="hscroll"><i></i></span></div>
          <button class="sbtn">s</button>
        </div>
      </section>

      <section class="win gantt">
        <header class="wbar2">
          <svg class="i16"><use href="#logo"/></svg>
          <h2 class="wtitle">Esempio Cantiere - 4D - GANTT</h2>
          <div class="winbtns">
            <button aria-label="Riduci"><svg class="i12"><use href="#w-min"/></svg></button>
            <button aria-label="Ingrandisci"><svg class="i12"><use href="#w-max"/></svg></button>
            <button aria-label="Chiudi"><svg class="i12"><use href="#w-close"/></svg></button>
          </div>
        </header>
        <div class="gbody">
          <div class="gtools">
            <span class="grip tall"></span>
            <button><svg class="i16"><use href="#t-add"/></svg></button>
            <button><svg class="i16"><use href="#t-mid"/></svg></button>
            <button><svg class="i16"><use href="#t-sub"/></svg></button>
            <button><svg class="i16"><use href="#t-del"/></svg></button>
            <button><svg class="i16"><use href="#bucket"/></svg></button><span class="gs"></span>
            <button><svg class="i16"><use href="#tri-up"/></svg></button>
            <button><svg class="i16"><use href="#tri-down"/></svg></button>
            <button><svg class="i16"><use href="#exp-all"/></svg></button>
            <button><svg class="i16"><use href="#col-all"/></svg></button><span class="gs"></span>
            <button><svg class="i16"><use href="#blk-plus"/></svg></button>
            <button><svg class="i16"><use href="#blk-minus"/></svg></button><span class="gs"></span>
            <button class="on"><svg class="i16"><use href="#center"/></svg></button>
            <button><svg class="i16"><use href="#fit"/></svg></button>
            <button><svg class="i16"><use href="#chain"/></svg></button><span class="gs"></span>
            <button><svg class="i16"><use href="#flag-g"/></svg></button>
            <button><svg class="i16"><use href="#flag-c"/></svg></button>
            <time class="now">29/05/2018 10:40</time><span class="dmark">D</span>
            <svg class="i16"><use href="#lens"/></svg>
            <button class="zb"><svg class="i18"><use href="#zminus"/></svg></button>
            <input class="zoom" type="range" aria-label="Zoom" value="57">
            <button class="zb"><svg class="i18"><use href="#zplus"/></svg></button>
          </div>
          <div class="gmain">
            <div class="tablewrap">
              <table class="tasks">
                <colgroup><col class="c0"><col class="c1"><col class="c2"><col class="c3"><col class="c3"></colgroup>
                <thead><tr><th class="dd"><svg class="caret"><use href="#caret"/></svg></th><th class="nm">Nome attività</th><th>Durata</th><th>Inizio</th><th>Fine</th></tr></thead>
                <tbody>
                  <tr class="chk"><td></td><td colspan="4"><label><input type="checkbox" checked>Videocamera (rullini/foto)</label></td></tr>
                  <tr class="chk last"><td></td><td colspan="4"><label><input type="checkbox" checked>Terreno</label></td></tr>
                  <tr class="b"><td class="gt x"></td><td>Organizzazion...</td><td>29 g</td><td>19/06/20...</td><td>27/07/20...</td></tr>
                  <tr><td class="gt"></td><td>Scavo e reinterro</td><td>92 g</td><td>30/07/2018</td><td>13/12/2018</td></tr>
                  <tr><td class="gt"></td><td>Automezzo</td><td>35 g</td><td>14/08/2018</td><td>20/12/2018</td></tr>
                  <tr class="b"><td class="gt x"></td><td>Postazioni di l...</td><td>213 g</td><td>03/09/2...</td><td>05/07/2...</td></tr>
                  <tr class="b"><td class="gt x"></td><td>Strutture Fon...</td><td>27 g</td><td>13/09/2...</td><td>19/10/2...</td></tr>
                  <tr class="b"><td class="gt x"></td><td>I° Impalcato ...</td><td>49 g</td><td>22/10/2...</td><td>17/12/2...</td></tr>
                </tbody>
              </table>
            </div>
            <div class="tscroll"><svg viewBox="0 0 10 6"><path d="M1 6h8L5 1z" fill="#555"/></svg><span class="thumb"></span><svg viewBox="0 0 10 6"><path d="M1 0h8L5 5z" fill="#555"/></svg></div>
            <div class="chart">
              <div class="ch1"><span>apr 2018 - giu 2018</span><span>lug 2018 - set 2018</span></div>
              <div class="ch2"><span>mag</span><span>giu</span><span>lug</span><span>ago</span><span>set</span></div>
              <div class="bars">
                <svg>
                  <path d="M0 0h2000v45H0z" fill="#dadada"/><path d="M0 45h2000v2H0z" fill="#00007a"/>
                  <path d="M88 0h2v170h-2z" fill="red"/>
                  <path d="M191.500 19v151" stroke="#000" stroke-dasharray="1 1.500"/>
                  <g fill="#a0dab4" stroke="#222"><path d="M84.500 .5h210v18h-210zM307.500 .5h78v18h-78zM413.500 .5h41v18h-41z"/></g>
                  <g fill="#efd9b0" stroke="#222"><path d="M84.500 23.500h16v18h-16zM106.500 23.500h25v18h-25zM175.500 23.500h32v18h-32zM304.500 23.500h81v18h-81z"/></g>
                  <path d="M147 48h135v5H147zM385 117h1600v5H385zM416 140h1600v5H416z" fill="#bebebe"/>
                  <path d="M147 53h11l-5.500 6zM271 53h11l-5.500 6zM385 122h11l-5.500 6zM416 145h11l-5.500 6z"/>
                  <path d="M282 71h94v15h-94zM397 71h57v15h-57zM329 94h76v15h-76z" fill="#00f"/><path d="M453 68h2v21h-2z" fill="red"/>
                </svg>
              </div>
              <div class="cscroll"><svg class="s10" viewBox="0 0 10 10"><path d="M1.500 1v8" stroke="#555"/><path d="M9 1v8L4 5z" fill="#555"/></svg><svg class="s10" viewBox="0 0 10 10"><path d="M7 1v8L2 5z" fill="#555"/></svg><span class="cthumb"></span><svg class="s10" viewBox="0 0 10 10"><path d="M3 1v8l5-4z" fill="#555"/></svg><svg class="s10" viewBox="0 0 10 10"><path d="M8.500 1v8" stroke="#555"/><path d="M1 1v8l5-4z" fill="#555"/></svg></div>
            </div>
          </div>
          <div class="player">
            <time class="clock">00:01:20</time>
            <button aria-label="Avvia"><svg class="i18" viewBox="0 0 18 18"><path d="M2 0l14 9-14 9z" fill="url(#g-play)"/></svg></button>
            <button aria-label="Ferma"><svg class="i18" viewBox="0 0 18 18"><path d="M1 1h16v16H1z" fill="url(#g-play)"/></svg></button>
            <button aria-label="Registra"><svg class="i18" viewBox="0 0 18 18"><circle cx="9" cy="9" r="8.200" fill="#d42028"/><path d="M1 9h16a8 8 0 0 1-16 0z" fill="#c01c28"/></svg></button>
            <div class="timeline">
              <div class="track"><i></i><input type="range" aria-label="Tempo" value="0"></div>
              <svg class="ticks" viewBox="0 0 543 8" preserveAspectRatio="none"><path d="M0 4h543" stroke="#444" stroke-width="5" stroke-dasharray="1.500 16.530"/><path d="M0 4h543" stroke="#111" stroke-width="8" stroke-dasharray="2 88.160"/></svg>
              <div class="times"><span>00:00</span><span>00:13</span><span>00:26</span><span>00:40</span><span>00:53</span><span>01:06</span><span>01:20</span></div>
            </div>
          </div>
          <div class="arrange"><span>Disponi finestre ambiente</span>
            <button aria-label="Orizzontale"><svg class="i16" viewBox="0 0 16 16"><path d="M.5 .5h15v15H.5z" fill="#fff" stroke="#333"/><path d="M1 1h14v3H1zM1 7h14v3H1z" fill="#2a78d0"/><path d="M0 7.500h16" stroke="#333"/></svg></button>
            <button aria-label="Ridotta"><svg class="i16" viewBox="0 0 16 16"><path d="M.5 .5h15v15H.5z" fill="#fff" stroke="#333"/><path d="M1 1h14v2H1zM1 10h14v3H1z" fill="#2a78d0"/><path d="M0 10.500h16" stroke="#333"/></svg></button>
            <span class="sep"></span>
          </div>
        </div>
      </section>
      <div class="mdi"><i></i></div>
    </div>

    <aside class="panel tools">
      <div class="phead"><svg class="i16"><use href="#gantt"/></svg><span>Strumenti GANTT</span></div>
      <div class="hidebar"><button><svg class="i16"><use href="#redx"/></svg>Nascondi</button></div>
      <div class="ttabs"><button class="active">BIM</button><button>FASI</button></div>
      <div class="tpage">
        <div class="objbox">
          <h2>Oggetti BIM:</h2>
          <p>Scegli gli oggetti e collegali al periodo desiderato nel GANTT con una semplice operazione di Drag&amp;Drop.</p>
          <div class="otabs"><button class="active">Tutti</button><button>Selezionati</button></div>
          <div class="olist">
            <div class="ohead"><span>Oggetti</span><span>Visibilità iniziale</span></div>
            <ul class="tree obj-tree">
              <li><button class="ex2" aria-label="Espandi">+</button><svg class="i16"><use href="#scaff"/></svg><span>Ponteggio (5)</span><svg class="bulb"><use href="#bulb"/></svg></li>
              <li><button class="ex2" aria-label="Espandi">+</button><svg class="i16"><use href="#rail"/></svg><span>Ringhiera (2)</span><svg class="bulb"><use href="#bulb"/></svg></li>
              <li><button class="ex2" aria-label="Espandi">+</button><svg class="i16"><use href="#sign"/></svg><span>Segnaletica (30)</span><svg class="bulb"><use href="#bulb"/></svg></li>
              <li><button class="ex2" aria-label="Comprimi">−</button><svg class="i16"><use href="#crate"/></svg><span>Servizio logistico (14)</span><svg class="bulb red"><use href="#bulb"/></svg></li>
              <li class="sub"><svg class="i16"><use href="#crate"/></svg><span>Servizio logistico 1069</span><svg class="bulb"><use href="#bulb"/></svg></li>
              <li class="sub"><svg class="i16"><use href="#crate"/></svg><span>Servizio logistico 1513</span><svg class="bulb"><use href="#bulb"/></svg></li>
              <li class="sub"><svg class="i16"><use href="#crate"/></svg><span>Servizio logistico 1353</span><svg class="bulb"><use href="#bulb"/></svg></li>
              <li class="sub"><svg class="i16"><use href="#crate"/></svg><span>Servizio logistico 1359</span><svg class="bulb"><use href="#bulb"/></svg></li>
              <li class="sub"><svg class="i16"><use href="#crate"/></svg><span>Servizio logistico 1349</span><svg class="bulb"><use href="#bulb"/></svg></li>
              <li class="sub"><svg class="i16"><use href="#crate"/></svg><span>Servizio logistico 1363</span><svg class="bulb"><use href="#bulb"/></svg></li>
              <li class="sub sel"><svg class="i16"><use href="#crate"/></svg><span>Servizio logistico 1063</span><svg class="bulb yel"><use href="#bulb"/></svg></li>
              <li class="sub"><svg class="i16"><use href="#crate"/></svg><span>Servizio logistico 1512</span><svg class="bulb"><use href="#bulb"/></svg></li>
            </ul>
            <div class="oscroll"><i></i></div>
          </div>
        </div>
        <div class="hsplit"><span class="grip h"></span></div>
        <div class="info">
          <p>L'ambiente GANTT consente la gestione 4D di un progetto BIM permettendo di impostare informazioni temporali direttamente sugli oggetti BIM del progetto.</p>
          <p class="ih"><b>Per associare oggetti ad un periodo:</b></p>
          <ul><li>aggiungere un periodo nel Gantt</li><li>selezionare uno o più oggetti dall'elenco e trascinarli sul periodo scelto.</li></ul>
        </div>
      </div>
    </aside>

    <nav class="rail">
      <button class="r1"><svg class="i16" viewBox="0 0 16 16"><path d="M3 .5h7l3 3V9H3z" fill="#fff" stroke="#ccc"/><path d="M1.500 8.500v6h3q2-.5 1.500-2-.2-1-1.500-1.200Q5.800 10 5 9q-.5-.7-3.500-.5M1.500 11.500h3M14.500 9.500q-1.500-1.200-3-1-2.500.5-2.500 3t2.500 3q1.500 0 3-1v-2H12" fill="none" stroke="#f0a080" stroke-width="1.700"/></svg>Background</button>
      <button class="r2"><svg class="i16" viewBox="0 0 16 16"><g fill="#e8eef6" stroke="#a8b0bc"><path d="M1.500 2.500h4v4h-4zM9.500 2.500h4v4h-4zM1.500 10.500h4v4h-4z"/></g><path d="M2 4l2 2 3-5" fill="none" stroke="#58b8e8" stroke-width="1.500"/><path d="M9 6l6 5h-3l1 4" fill="#fff" stroke="#a8b0bc"/></svg>Filtro Selezione</button>
      <button class="r3 active"><svg class="i16"><use href="#gantt"/></svg>Strumenti GANTT</button>
    </nav>
  </main>

  <footer class="status"><span class="s1"></span><span class="s2">X: -39.52 - Y: -29.33 - Z: -1.50 [m]</span><span class="s3"></span><span class="s3"></span><span class="s4"></span></footer>

  <div class="notes">
    <p class="n1">OGGETTO VISIBILE NEL MODELLO</p>
    <p class="n2">accesa la "lampadina" della visibilità iniziale</p>
    <p class="n3"></p>
    <p class="n4">attivata la simulazione del gantt</p>
    <svg viewBox="0 0 1336 913"><g fill="none" stroke="#000" stroke-width="3"><path d="M638 448.500h303L1046 578"/><path d="M1046.500 577.500h226v22h-226z"/><path d="M601.500 714V587.500h33V714M601.500 731v50.500h33V731"/></g></svg>
  </div>
</div>
</body>
</html>
```
FILE: styles.css
```css
:root {
  --ui: "Open Sans", "Noto Sans", sans-serif;
  --small: "DejaVu Sans Condensed", "DejaVu Sans", sans-serif;
  --line: #7f98bb;
  --pale: #cfdcee;
}
* { box-sizing: border-box; }
body { margin: 0; font: 11px/14px var(--ui); color: #1e395b; }
button { font: inherit; color: inherit; background: none; border: 0; padding: 0; margin: 0; display: inline-flex; align-items: center; justify-content: center; white-space: nowrap; }
h1, h2, p, ul { margin: 0; padding: 0; font: inherit; }
ul { list-style: none; }
svg { display: block; flex: none; }
.defs { position: absolute; width: 0; height: 0; }
.i12 { width: 12px; height: 12px; }
.i16 { width: 16px; height: 16px; }
.i18 { width: 18px; height: 18px; }
.i30 { width: 30px; height: 30px; }
.i32 { width: 32px; height: 32px; }
.caret { width: 6px; height: 4px; color: #55606e; }
.pale { color: #99a; }
.flip { transform: scaleX(-1); filter: grayscale(1); opacity: .5; }

.app { position: relative; height: 100vh; min-height: 800px; display: flex; flex-direction: column; padding: 0 7px 7px; background: linear-gradient(#c5d6ed, #bccfe6 60px, #bccfe7); border: 1px solid #8993a8; border-radius: 7px; overflow: hidden; }

.titlebar { display: grid; grid-template-columns: 1fr auto 1fr; align-items: center; height: 32px; flex: none; }
.title { font-size: 12px; font-weight: 400; color: #253650; padding-left: 138px; }
.quick { display: flex; align-items: center; padding-left: 2px; }
.qb { width: 24px; height: 24px; }
.bar { width: 1px; height: 16px; background: #333; margin: 0 4px 0 5px; }
.sep { width: 2px; height: 22px; margin: 0 1px; border-left: 1px solid #9fb3cf; border-right: 1px solid #eef4fb; }
.quick .bar { margin-right: 4px; }
.quick .caret { margin: 0 5px 0 4px; }
.gold { background: linear-gradient(#ffdc78, #ffd060 50%, #ffee88); border: 1px solid #c49a3c; border-radius: 3px; }
.winbtns { display: flex; justify-content: flex-end; gap: 24px; }
.titlebar .winbtns { padding-right: 12px; }

.tabs { display: flex; height: 26px; flex: none; align-items: flex-end; }
.home { width: 59px; height: 26px; background: linear-gradient(#3a78d0, #2358b0 50%, #3f8ae0); border: 1px solid #1d4a94; border-radius: 3px 3px 0 0; color: #fff; font-size: 12px; margin-right: 5px; }
.tab { height: 24px; padding: 0 13px; color: #1e395b; margin-right: 1px; }
.tab.active { background: #f3f9ff; border: 1px solid #8ea6c6; border-bottom: 0; border-radius: 3px 3px 0 0; padding: 0 12px; }
.collapse { margin: 0 6px 7px auto; }

.ribbon { display: flex; flex: none; height: 99px; background: linear-gradient(#f1f7ff, #e6eef9 45%, #d8e4f2); border: 1px solid var(--line); color: #1e395b; }
.rgroup { display: flex; flex-direction: column; border-right: 1px solid #9fb3cf; padding: 4px 4px; }
.rrow { display: flex; flex: 1; align-items: flex-start; }
.rlabel { text-align: center; color: #3e5578; position: relative; }
.g-draw { width: 332px; }
.g-clip { width: 86px; }
.g-snap { width: 77px; }
.g-snap .rlabel { padding-right: 18px; }
.g-snap .rlabel { text-align: right; padding-right: 32px; }
.g-vis, .g-copy { width: 71px; padding: 4px 0; }
.big { flex: none; flex-direction: column; justify-content: flex-start; height: 72px; line-height: 14px; padding-top: 4px; }
.big > svg.i32 { margin-bottom: 6px; }
.big .caret { margin-top: 4px; }
.big span .caret { display: inline-block; margin: 0 0 2px; }
.big.off { color: #8f949c; }
.big.off .caret { color: #a0a4aa; }
.select { width: 50px; border: 1px solid #c49a3c; border-radius: 3px; background: linear-gradient(#ffd468, #ffe488 54%, #ffe07a 55%, #ffe994); padding: 0; }
.sel-top { align-self: stretch; display: flex; justify-content: center; padding-top: 4px; height: 39px; border-bottom: 1px solid #c49a3c; margin-bottom: 2px; }
.arrows { width: 30px; height: 72px; display: flex; flex-direction: column; justify-content: space-between; align-items: center; padding: 5px 0; }
.arrows svg { width: 14px; height: 13px; }
.rsep { flex: none; width: 1px; height: 62px; background: #a9bbd3; margin: 5px 10px 0 4px; }
.r2nd { margin: 5px 5px 0 -6px; }
.w76 { width: 76px; }
.w74 { width: 74px; }
.w70 { width: 70px; }
.w52 { width: 52px; }
.w44 { width: 44px; }
.stack { display: flex; flex-direction: column; width: 24px; height: 76px; justify-content: space-between; padding: 4px 0; align-items: center; }
.tight { padding: 0; }
.tight button { width: 24px; height: 24px; }
.launch { width: 8px; height: 8px; position: absolute; right: 4px; top: 4px; }
.rspace { flex: 1; display: flex; align-items: center; justify-content: flex-end; padding-right: 8px; }
.grip { display: block; background: radial-gradient(circle, #7f98bb 1px, transparent 1px); background-size: 4px 4px; }
.grip.v { width: 3px; height: 16px; background-size: 3px 4px; }
.grip.h { width: 16px; height: 3px; background-size: 4px 3px; }
.grip.tall { width: 3px; height: 18px; background-size: 3px 4px; margin: 0 1px 0 7px; }
.help { width: 46px; margin: 0 1px 2px 0; background: linear-gradient(90deg, #eef5fd, #d4e1f1); border-right: 1px solid var(--line); display: flex; flex-direction: column; align-items: center; gap: 8px; padding-top: 7px; }

.work { display: flex; flex: 1; min-height: 0; background: #d3e0f0; border: 1px solid var(--line); border-top: 0; padding: 3px 0 0 1px; }
.panel { display: flex; flex-direction: column; border: 1px solid var(--line); background: var(--pale); box-shadow: inset 0 0 0 1px #e6eef8; min-height: 0; margin-bottom: 1px; }
.phead { display: flex; align-items: center; gap: 3px; height: 23px; flex: none; padding: 0 5px 0 1px; font: 11px/14px var(--small); color: #6676a0; background: linear-gradient(#dbe6f3, #ccd9ea); }
.tools .phead { padding-left: 4px; }
.pushpin { margin-left: auto; }
.project { width: 200px; padding: 1px 2px; flex: none; }
.projbox { display: flex; align-items: center; height: 24px; flex: none; background: #fff; border: 1px solid #8c98ac; box-shadow: 0 0 0 2px #9db9f0; margin: 2px 1px 1px; padding-left: 8px; color: #000; }
.projbox .dots { width: 10px; border-top: 1px dotted #999; margin-right: 3px; }
.projbox b, .hl { flex: 1; align-self: stretch; background: #fff07c; font: bold 11px/19px var(--small); margin: 1px 1px 1px 1px; padding-left: 2px; }
.ptitle { font-weight: 700; color: #33486b; padding: 8px 8px 9px; }
.navhead { background: #e3bb8a; border: 1px solid #5a3c14; font: 11px/18px var(--small); color: #111; text-align: center; margin: 0 1px; flex: none; }
.tree { font: 11px/14px var(--small); color: #000; }
.nav-tree { flex: 1; background: #fff; border: 1px solid #8c98ac; min-height: 0; overflow: hidden; }
.nav-tree li { height: 19px; display: flex; align-items: center; gap: 3px; position: relative; }
.l0 { padding-left: 4px; }
.l1 { padding-left: 23px; }
.nav-tree .l2 { padding-left: 58px; }
.nav-tree .leaf { padding-left: 20px; }
.nav-tree .ex + svg { margin-left: 2px; }
.nav-tree li::before { content: ""; position: absolute; left: 9px; top: 0; height: 19px; border-left: 1px dotted #bbb; }
.nav-tree li.leaf::after, .nav-tree .l2::after { content: ""; position: absolute; left: 10px; top: 9px; width: 8px; border-top: 1px dotted #bbb; }
.nav-tree .l2::after { left: 47px; width: 9px; height: 0; }
.nav-tree .hl { margin: 0; padding: 0; }
.ex { width: 11px; height: 11px; border: 1px solid #7d93b8; border-radius: 2px; background: linear-gradient(#fff, #ccd8ea); font: 11px/9px var(--small); color: #223; position: relative; }
.splitter { height: 7px; margin: 2px -1px 0; background: #d5e5fa; border-bottom: 1px solid var(--line); border-top: 1px solid var(--line); flex: none; }
.sections { display: flex; flex-direction: column; padding: 0 1px; }
.sections button { height: 32px; margin: 2px 0; justify-content: flex-start; gap: 4px; padding-left: 6px; font-weight: 700; border: 1px solid transparent; }
.sections .current { border-color: #7f98bb; background: linear-gradient(#c9daee, #b0c8e4 50%, #c2d6ee); }
.more { height: 30px; flex: none; display: flex; justify-content: flex-end; padding: 14px 13px 0; }

.center { flex: 1; min-width: 0; display: flex; flex-direction: column; margin: 0 2px 0 3px; }
.win { border: 1px solid #8a9fbc; border-radius: 6px 6px 0 0; display: flex; flex-direction: column; min-height: 0; padding: 0 5px 7px 6px; }
.view { flex: 1; background: #dfeaf7; margin-bottom: 1px; }
.gantt { flex: 0 0 350px; background: linear-gradient(#c6d6eb, #bccfe7 30px); padding-bottom: 5px; }
.wbar { height: 30px; flex: none; display: flex; align-items: center; padding-left: 2px; }
.wbar > button { width: 24px; height: 24px; flex: none; }
.wbar .caret { margin: 0 4px 0 3px; }
.wbar .sep { margin: 0 2px 0 1px; flex: none; }
.wbar .bar { margin: 0 2px 0 5px; flex: none; }
.wtitle { text-align: center; }
.wbar .wtitle { flex: 1; color: #3058a8; }
.win .winbtns { padding-right: 13px; }
.wbar2 { height: 30px; flex: none; display: grid; grid-template-columns: 1fr auto 1fr; align-items: center; padding-left: 2px; }
.viewbody { flex: 1; min-height: 0; display: grid; grid-template: minmax(0, 1fr) 21px / minmax(0, 1fr) 18px; border: 1px solid #7089a8; background: #b9cbe1; }
.scene { border: 5px solid red; background: #fff; min-height: 0; overflow: hidden; }
.scene svg { width: 100%; height: 100%; }
.vscroll { background: #efefef; border-left: 1px solid #fff; display: grid; place-items: center; }
.vscroll span { width: 1px; height: 18px; background: #888; }
.simbar { display: flex; }
.sim { padding: 0 11px 0 5px; background: linear-gradient(#d9e5f4, #b4c8df); border-right: 1px solid #8a9fbc; }
.hscroll { flex: 1; background: #efefef; margin: 1px 0 4px; display: grid; place-items: center; border-left: 1px solid #fff; }
.hscroll i { width: 17px; height: 1px; background: #888; }
.sbtn { margin: 2px 2px 4px; border: 1px solid #9db3d2; background: #d4e2f4; font-weight: 700; font-size: 10px; color: #13439b; }

.gbody { flex: 1; min-height: 0; display: flex; flex-direction: column; border: 1px solid #7089a8; background: #dadada; }
.gtools { height: 28px; flex: none; display: flex; align-items: center; background: #e2e2ec; padding-right: 6px; }
.gtools button { width: 24px; height: 24px; flex: none; }
.gtools .on { background: #ffbf74; border: 1px solid #55607c; }
.gs { width: 1px; height: 20px; background: #aab; margin: 0 4px 0 5px; flex: none; }
.now { font: 15px/20px var(--small); color: #f01010; margin-left: 4px; flex: none; }
.dmark { font: 11px/14px var(--small); color: #000; margin: 0 6px; }
.gtools .zb { width: 20px; margin-left: 7px; }
.gtools .zb:last-child { margin-left: 0; }
.zoom { appearance: none; flex: 1; min-width: 0; margin: 0 3px 0 1px; height: 16px; background: linear-gradient(#7ba0cc, #7ba0cc) center / 100% 1px no-repeat; }
.zoom::-webkit-slider-thumb { appearance: none; width: 6px; height: 14px; background: #fff; border: 1px solid #3a689f; }
.gmain { flex: 1; min-height: 0; display: flex; }
.tablewrap { width: 291px; min-height: 0; overflow: hidden; margin-bottom: 16px; background: #fff; flex: none; }
.tasks { width: 291px; border-collapse: separate; border-spacing: 0; table-layout: fixed; font: 11px/14px var(--small); color: #000; }
.c0 { width: 22px; }
.c1 { width: 93px; }
.c2 { width: 43px; }
.tasks th { height: 30px; padding: 0; font: 11px/14px var(--small); color: #444; background: linear-gradient(#fbfbfd, #f0f1f5); border: 1px solid #a8acb8; border-width: 1px 1px 1px 0; white-space: nowrap; overflow: hidden; }
.tasks th.dd { border-right: 0; padding-left: 6px; }
.tasks .dd .caret { color: #000; }
.tasks th.nm { text-align: left; padding-left: 2px; }
.tasks td { height: 23px; padding: 0 0 0 2px; border: 1px solid #a8a8b0; border-width: 0 1px 1px 0; white-space: nowrap; overflow: hidden; }
.tasks td:nth-child(2) { padding-left: 1px; }
.tasks .chk td { background: #dadada; border: 0; font: bold 12px/16px var(--small); padding: 0; }
.tasks .last td { border-bottom: 2px solid #00007a; }
.tasks label { display: flex; align-items: center; gap: 8px; }
.tasks input { appearance: none; width: 14px; height: 14px; margin: 0; background: #fff; border: 1px solid #999; position: relative; }
.tasks input:checked::before { content: ""; position: absolute; left: -2px; top: -3px; width: 18px; height: 15px; background: #18a018; clip-path: polygon(0 45%, 18% 35%, 38% 65%, 90% 0, 100% 5%, 42% 100%, 32% 100%); }
.tasks .b td { font-weight: 700; font-family: var(--ui); }
.tasks td.gt { border-bottom: 0; background: repeating-linear-gradient(#bbb 0 1px, transparent 1px 2px) 9px 0 / 1px 100% no-repeat; position: relative; }
.tasks td.gt::after { content: ""; position: absolute; left: 12px; top: 11px; width: 9px; border-top: 1px dotted #999; }
.tasks td.x::before { content: ""; position: absolute; left: 4px; top: 9px; width: 5px; height: 5px; border: solid #888; border-width: 2px 2px 0 0; transform: rotate(45deg); }
.tscroll { width: 15px; margin-bottom: 16px; background: #fafafa; display: flex; flex-direction: column; align-items: center; padding: 5px 0; flex: none; }
.tscroll svg { width: 10px; height: 6px; }
.tscroll .thumb { width: 14px; height: 74px; margin: 5px 0 auto; border: 1px solid #aab0b8; border-radius: 2px; background: repeating-linear-gradient(#777 0 1px, transparent 1px 2px) center / 8px 8px no-repeat, linear-gradient(90deg, #fafafa, #e4e4e8); }
.chart { flex: 1; min-width: 0; display: flex; flex-direction: column; margin-left: 4px; background: #fff; overflow: hidden; }
.ch1, .ch2 { display: flex; height: 15px; flex: none; font: 9px/13px var(--small); color: #101078; background: #f6f6f6; border-top: 1px solid #000; }
.ch1 span, .ch2 span { border-left: 1px solid #000; flex: none; }
.ch1 span { width: 191px; padding-left: 3px; }
.ch1 span:last-child { width: auto; }
.ch2 { border-bottom: 1px solid #000; height: 16px; }
.ch2 span { width: 97px; text-align: center; }
.ch2 span:nth-child(2) { width: 94px; }
.bars { flex: 1; min-height: 0; }
.bars svg { width: 100%; height: 100%; }
.cscroll { height: 16px; flex: none; background: linear-gradient(#eee, #fff); display: flex; align-items: center; gap: 6px; padding: 0 4px; }
.s10 { width: 10px; height: 10px; }
.cthumb { width: 17px; height: 15px; margin-left: auto; border: 1px solid #aaa; border-radius: 2px; background: repeating-linear-gradient(90deg, #777 0 1px, transparent 1px 2px) center / 8px 7px no-repeat, #eee; }
.player { height: 41px; flex: none; display: flex; align-items: center; padding: 0 12px 0 11px; }
.clock { font: bold 16px/20px var(--small); color: #7f4000; width: 80px; }
.player button { margin-right: 16px; }
.timeline { flex: 1; margin-left: 9px; min-width: 0; padding: 2px 0 0; }
.track { display: grid; margin: 0 5px; }
.track > * { grid-area: 1 / 1; }
.track i { margin: 0 5px; align-self: center; height: 7px; background: #f0f7ff; border: 1px solid #a8ccf4; }
.track input { appearance: none; margin: 0; height: 14px; background: none; width: 100%; }
.track input::-webkit-slider-thumb { appearance: none; width: 12px; height: 13px; background: #2868b8; clip-path: polygon(0 0, 100% 0, 58% 80%, 58% 100%, 42% 100%, 42% 80%); }
.ticks { width: calc(100% - 20px); height: 8px; margin: 0 10px; }
.times { display: flex; justify-content: space-between; margin: 0 -4px; font: 11px/14px var(--small); color: #222; }
.arrange { height: 25px; flex: none; display: flex; align-items: center; gap: 8px; padding-left: 5px; color: #8a95a6; background: linear-gradient(#dce6f3, #b3c6dd); border-top: 1px solid #8a9fbc; }
.mdi { height: 16px; flex: none; margin-top: 1px; background: #f0f0f0; display: flex; align-items: center; }
.mdi i { height: 2px; width: 83%; margin-left: 16px; background: #7c7c7c; }

.tools { width: 291px; flex: none; }
.hidebar { height: 42px; flex: none; background: linear-gradient(#eff6fe, #d4e0ef); border-bottom: 1px solid var(--line); padding: 4px 11px; }
.hidebar button { flex-direction: column; gap: 2px; line-height: 15px; }
.ttabs { display: flex; align-items: flex-end; height: 28px; flex: none; padding-left: 7px; }
.ttabs button { width: 40px; height: 24px; background: #a9c0dc; border: 1px solid #8ca4c6; }
.ttabs .active { width: 38px; height: 27px; background: #fff; }
.tpage { flex: 1; min-height: 0; display: flex; flex-direction: column; margin: 0 7px 8px 4px; border: 1px solid #8ca4c6; background: #dce7f5; padding: 1px; }
.objbox { flex: 0 0 361px; display: flex; flex-direction: column; background: #eaf1fc; border: 1px solid #8ca4c6; min-height: 0; }
.objbox h2 { font: 16px/22px "DejaVu Sans", sans-serif; color: #80702c; padding: 5px 9px 7px; }
.objbox p { font: 11px/13px Roboto, sans-serif; color: #b35a10; padding: 0 4px 0 6px; }
.otabs { display: flex; margin-top: 10px; font: 11px/14px var(--small); color: #000; }
.otabs button { height: 19px; padding: 0 5px; background: #f0f0f0; border: 1px solid #e0e0e0; }
.otabs .active { background: #fff; width: 40px; }
.olist { flex: 1; min-height: 0; position: relative; background: #fff; border: 1px solid #999; border-width: 1px 0 0 1px; overflow: hidden; margin-right: 1px; }
.ohead { display: grid; grid-template-columns: 1fr 56px; align-items: center; height: 32px; margin-right: 17px; font: 11px/13px var(--small); color: #000; }
.ohead span { padding-left: 3px; }
.ohead span:last-child { text-align: center; padding: 3px 0 3px; border-left: 1px solid #ddd; }
.obj-tree { margin-right: 17px; }
.obj-tree li { height: 20px; display: flex; align-items: center; gap: 2px; padding-left: 5px; position: relative; }
.obj-tree li::before { content: ""; position: absolute; left: 9px; top: 0; height: 20px; border-left: 1px dotted #aaa; }
.obj-tree .sub { padding-left: 38px; background: repeating-linear-gradient(#999 0 1px, transparent 1px 2px) 29px 0 / 1px 100% no-repeat; }
.obj-tree .sub::after { content: ""; position: absolute; left: 30px; top: 10px; width: 8px; border-top: 1px dotted #999; }
.ex2 { width: 9px; height: 9px; border: 1px solid #888; background: #fff; font: 9px/7px var(--small); position: relative; }
.ex2 + svg { margin-left: 5px; }
.obj-tree span { flex: 1; }
.obj-tree .sel span { background: linear-gradient(90deg, #d7e4f2 calc(100% - 22px), #fff 0); line-height: 17px; }
.bulb { width: 10px; height: 14px; margin-right: 24px; fill: url(#g-grey); }
.bulb.red { fill: url(#g-red); }
.bulb.yel { fill: url(#g-yel); }
.oscroll { position: absolute; right: 0; top: 0; bottom: 0; width: 16px; background: #f0f0f0; }
.oscroll i { position: absolute; left: 7px; bottom: 30px; width: 2px; height: 16px; background: #777; }
.hsplit { height: 8px; flex: none; display: grid; place-items: center; }
.info { flex: 1; min-height: 0; background: #ebf1fb; border: 1px solid #8ca4c6; padding: 4px 19px 5px 9px; font: 12px/14px var(--small); color: #707070; }
.info .ih { margin-top: 14px; }
.info li { padding-left: 12px; margin-right: -10px; position: relative; }
.info li::before { content: "•"; position: absolute; left: 0; }
.rail { width: 25px; flex: none; margin: 1px 0 0 4px; display: flex; flex-direction: column; gap: 5px; }
.rail button { writing-mode: vertical-rl; width: 24px; border: 1px solid #8ca4c6; border-right: 0; background: #d3dff0; padding: 3px 0; gap: 8px; justify-content: flex-start; font-size: 10px; }
.rail .r1 { height: 87px; }
.rail .r2 { height: 104px; }
.rail .r3 { height: 113px; }
.rail .active { background: #a9bfdc; }

.status { height: 24px; flex: none; display: flex; background: linear-gradient(#dde8f5, #b4c7de); border: 1px solid var(--line); line-height: 23px; }
.status span { border-right: 1px solid #8fa4c2; }
.s1 { width: 60%; }
.status .s2 { flex: 1; text-align: right; padding-right: 20px; }
.status .s3 { width: 29px; }
.s4 { width: 77px; }

.notes { position: absolute; inset: -1px; pointer-events: none; color: #000; font: bold 20px/22px Lato, sans-serif; }
.notes svg { position: absolute; inset: 0; width: 1336px; height: 913px; }
.notes p { position: absolute; white-space: nowrap; }
.n1 { left: 619px; top: 369px; font-size: 18px; }
.n2 { left: 542px; top: 425px; }
.n3 { left: 603px; top: 708px; width: 30px; height: 29px; background: #fff; }
.n4 { left: 554px; top: 711px; }
```
